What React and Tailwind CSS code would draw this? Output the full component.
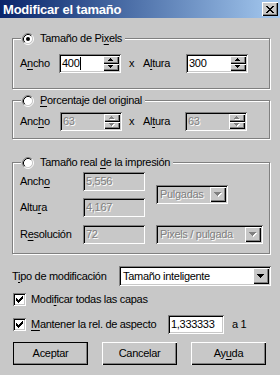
import React from "react";

const sunken =
  "shadow-[inset_1px_1px_0_#808080,inset_-1px_-1px_0_#fff,inset_2px_2px_0_#000,inset_-2px_-2px_0_#c8c8c8]";
const raised =
  "shadow-[inset_1px_1px_0_#fff,inset_-1px_-1px_0_#000,inset_-2px_-2px_0_#808080]";
const dim = "text-[#808080] [text-shadow:1px_1px_0_#fff]";

function Arrow({ up, w = 7, off }) {
  const rows = [];
  for (let i = 0; w - 2 * i > 0; i++) rows.push(i);
  const h = rows.length;
  const draw = (fill, d) =>
    rows.map((i) => (
      <rect
        key={fill + i}
        x={i + d}
        y={(up ? h - 1 - i : i) + d}
        width={w - 2 * i}
        height="1"
        fill={fill}
      />
    ));
  return (
    <svg width={w + 1} height={h + 1} shapeRendering="crispEdges" className="block">
      {off && draw("#fff", 1)}
      {draw(off ? "#808080" : "#000", 0)}
    </svg>
  );
}

function Radio({ checked }) {
  return (
    <svg width="12" height="12" viewBox="0 0 12 12" className="block shrink-0">
      <circle cx="6" cy="6" r="4.5" fill="#fff" />
      <path d="M2.11 9.89A5.5 5.5 0 0 1 9.89 2.11" fill="none" stroke="#808080" />
      <path d="M9.89 2.11A5.5 5.5 0 0 1 2.11 9.89" fill="none" stroke="#fff" />
      <path d="M2.82 9.18A4.5 4.5 0 0 1 9.18 2.82" fill="none" stroke="#000" />
      <path d="M9.18 2.82A4.5 4.5 0 0 1 2.82 9.18" fill="none" stroke="#c8c8c8" />
      {checked && <circle cx="6" cy="6" r="2" fill="#000" />}
    </svg>
  );
}

function Check() {
  const starts = [2, 3, 4, 3, 2, 1, 0];
  return (
    <div className={`w-[13px] h-[13px] shrink-0 bg-white ${sunken}`}>
      <svg width="13" height="13" shapeRendering="crispEdges" className="block">
        {starts.map((s, i) => (
          <rect key={i} x={3 + i} y={3 + s} width="1" height="3" fill="#000" />
        ))}
      </svg>
    </div>
  );
}

function SpinBtn({ up, off }) {
  return (
    <div className={`flex-1 flex items-center justify-center bg-[#c8c8c8] ${raised}`}>
      <Arrow up={up} w={5} off={off} />
    </div>
  );
}

function Spin({ value, off, caret, w = "w-[62px]" }) {
  return (
    <div className={`${w} h-[19px] p-[2px] flex shrink-0 ${off ? "bg-[#c8c8c8]" : "bg-white"} ${sunken}`}>
      <div className={`flex-1 flex items-center pl-[1px] ${off ? dim : ""}`}>
        {value}
        {caret && <span className="ml-[1px] w-px h-[13px] bg-black" />}
      </div>
      <div className="w-[16px] flex flex-col">
        <SpinBtn up off={off} />
        <SpinBtn off={off} />
      </div>
    </div>
  );
}

function Field({ value, off, w }) {
  return (
    <div className={`${w} h-[19px] p-[2px] flex items-center shrink-0 ${off ? "bg-[#c8c8c8]" : "bg-white"} ${sunken}`}>
      <span className={`pl-[1px] ${off ? dim : ""}`}>{value}</span>
    </div>
  );
}

function Combo({ value, off, w, h = "h-[19px]" }) {
  return (
    <div className={`${w} ${h} p-[2px] flex shrink-0 ${off ? "bg-[#c8c8c8]" : "bg-white"} ${sunken}`}>
      <div className={`flex-1 flex items-center pl-[2px] ${off ? dim : ""}`}>{value}</div>
      <div className={`w-[16px] flex items-center justify-center bg-[#c8c8c8] ${raised}`}>
        <Arrow w={7} off={off} />
      </div>
    </div>
  );
}

function Group({ children, legend, checked, className }) {
  return (
    <fieldset
      className={`w-[258px] min-w-0 border border-[#808080] shadow-[inset_1px_1px_0_#fff,1px_1px_0_#fff] ${className}`}
    >
      <legend className="ml-[8px] px-[1px] pr-[3px] bg-[#c8c8c8]">
        <span className="flex items-center gap-[6px] h-[15px]">
          <Radio checked={checked} />
          <span>{legend}</span>
        </span>
      </legend>
      {children}
    </fieldset>
  );
}

function Button({ children, def }) {
  return (
    <div
      className={`w-[75px] h-[23px] flex items-center justify-center bg-[#c8c8c8] ${raised} ${
        def ? "outline outline-1 outline-black -outline-offset-1" : ""
      }`}
    >
      {children}
    </div>
  );
}

const U = ({ children }) => <span className="underline underline-offset-[2px]">{children}</span>;

export default function App() {
  return (
    <div className="w-[280px] h-[375px] overflow-hidden bg-[#c8c8c8] text-black text-[11px] leading-[13px] tracking-[-0.3px] font-['Liberation_Sans',Arial,sans-serif]">
      {/* title bar */}
      <div className="h-[18px] flex items-center justify-between pl-[3px] pr-[2px] bg-linear-to-r from-[#0a246a] to-[#a6caf0]">
        <span className="text-white font-bold text-[13px] tracking-[-0.2px]">Modificar el tamaño</span>
        <div className={`w-[16px] h-[14px] flex items-center justify-center bg-[#c8c8c8] ${raised}`}>
          <svg width="8" height="7" shapeRendering="crispEdges" className="block">
            {[[0, 6], [1, 5], [2, 4], [3], [2, 4], [1, 5], [0, 6]].map((xs, y) =>
              xs.map((x) => <rect key={y + "-" + x} x={x} y={y} width="2" height="1" fill="#000" />)
            )}
          </svg>
        </div>
      </div>

      <div className="pl-[12px]">
        {/* Pixels */}
        <Group checked legend={<>Tamaño de Pi<U>x</U>els</>} className="mt-[13px] pt-[8px] pb-[15px]">
          <div className="flex items-center pl-[7px]">
            <span className="w-[39px]">A<U>n</U>cho</span>
            <Spin value="400" caret />
            <span className="ml-[8px] w-[14px]">x</span>
            <span className="w-[43px]">A<U>l</U>tura</span>
            <Spin value="300" />
          </div>
        </Group>

        {/* Porcentaje */}
        <Group legend={<><U>P</U>orcentaje del original</>} className="mt-[4px] pt-[4px] pb-[7px]">
          <div className="flex items-center pl-[7px]">
            <span className="w-[40px]">Anc<U>h</U>o</span>
            <Spin value="63" off />
            <span className="ml-[7px] w-[14px]">x</span>
            <span className="w-[42px]">Al<U>t</U>ura</span>
            <Spin value="63" off />
          </div>
        </Group>

        {/* Impresión */}
        <Group legend={<>Tamaño real <U>d</U>e la impresión</>} className="mt-[16px] pt-[2px] pb-[9px]">
          <div className="flex pl-[7px]">
            <div className="flex flex-col gap-[7px]">
              <div className="flex items-center">
                <span className="w-[63px]">Anch<U>o</U></span>
                <Field value="5,556" off w="w-[62px]" />
              </div>
              <div className="flex items-center">
                <span className="w-[63px]">Altu<U>r</U>a</span>
                <Field value="4,167" off w="w-[62px]" />
              </div>
            </div>
            <div className="ml-[11px] flex items-center">
              <Combo value="Pulgadas" off w="w-[72px]" />
            </div>
          </div>
          <div className="flex items-center pl-[7px] mt-[8px]">
            <span className="w-[63px]">R<U>e</U>solución</span>
            <Field value="72" off w="w-[62px]" />
            <div className="ml-[11px]">
              <Combo value="Pixels / pulgada" off w="w-[107px]" />
            </div>
          </div>
        </Group>

        {/* tipo */}
        <div className="flex items-center mt-[12px]">
          <span className="w-[107px]">T<U>i</U>po de modificación</span>
          <Combo value="Tamaño inteligente" w="w-[152px]" h="h-[20px]" />
        </div>

        <div className="flex items-center gap-[5px] mt-[7px] pl-[1px]">
          <Check />
          <span>Modi<U>f</U>icar todas las capas</span>
        </div>

        <div className="flex items-center mt-[9px] pl-[1px]">
          <Check />
          <span className="ml-[5px] w-[137px]"><U>M</U>antener la rel. de aspecto</span>
          <Field value="1,333333" w="w-[56px]" />
          <span className="ml-[8px]">a 1</span>
        </div>

        <div className="flex gap-[14px] mt-[8px] pl-[1px]">
          <Button def>Aceptar</Button>
          <Button>Cancelar</Button>
          <Button>Ay<U>u</U>da</Button>
        </div>
      </div>
    </div>
  );
}
